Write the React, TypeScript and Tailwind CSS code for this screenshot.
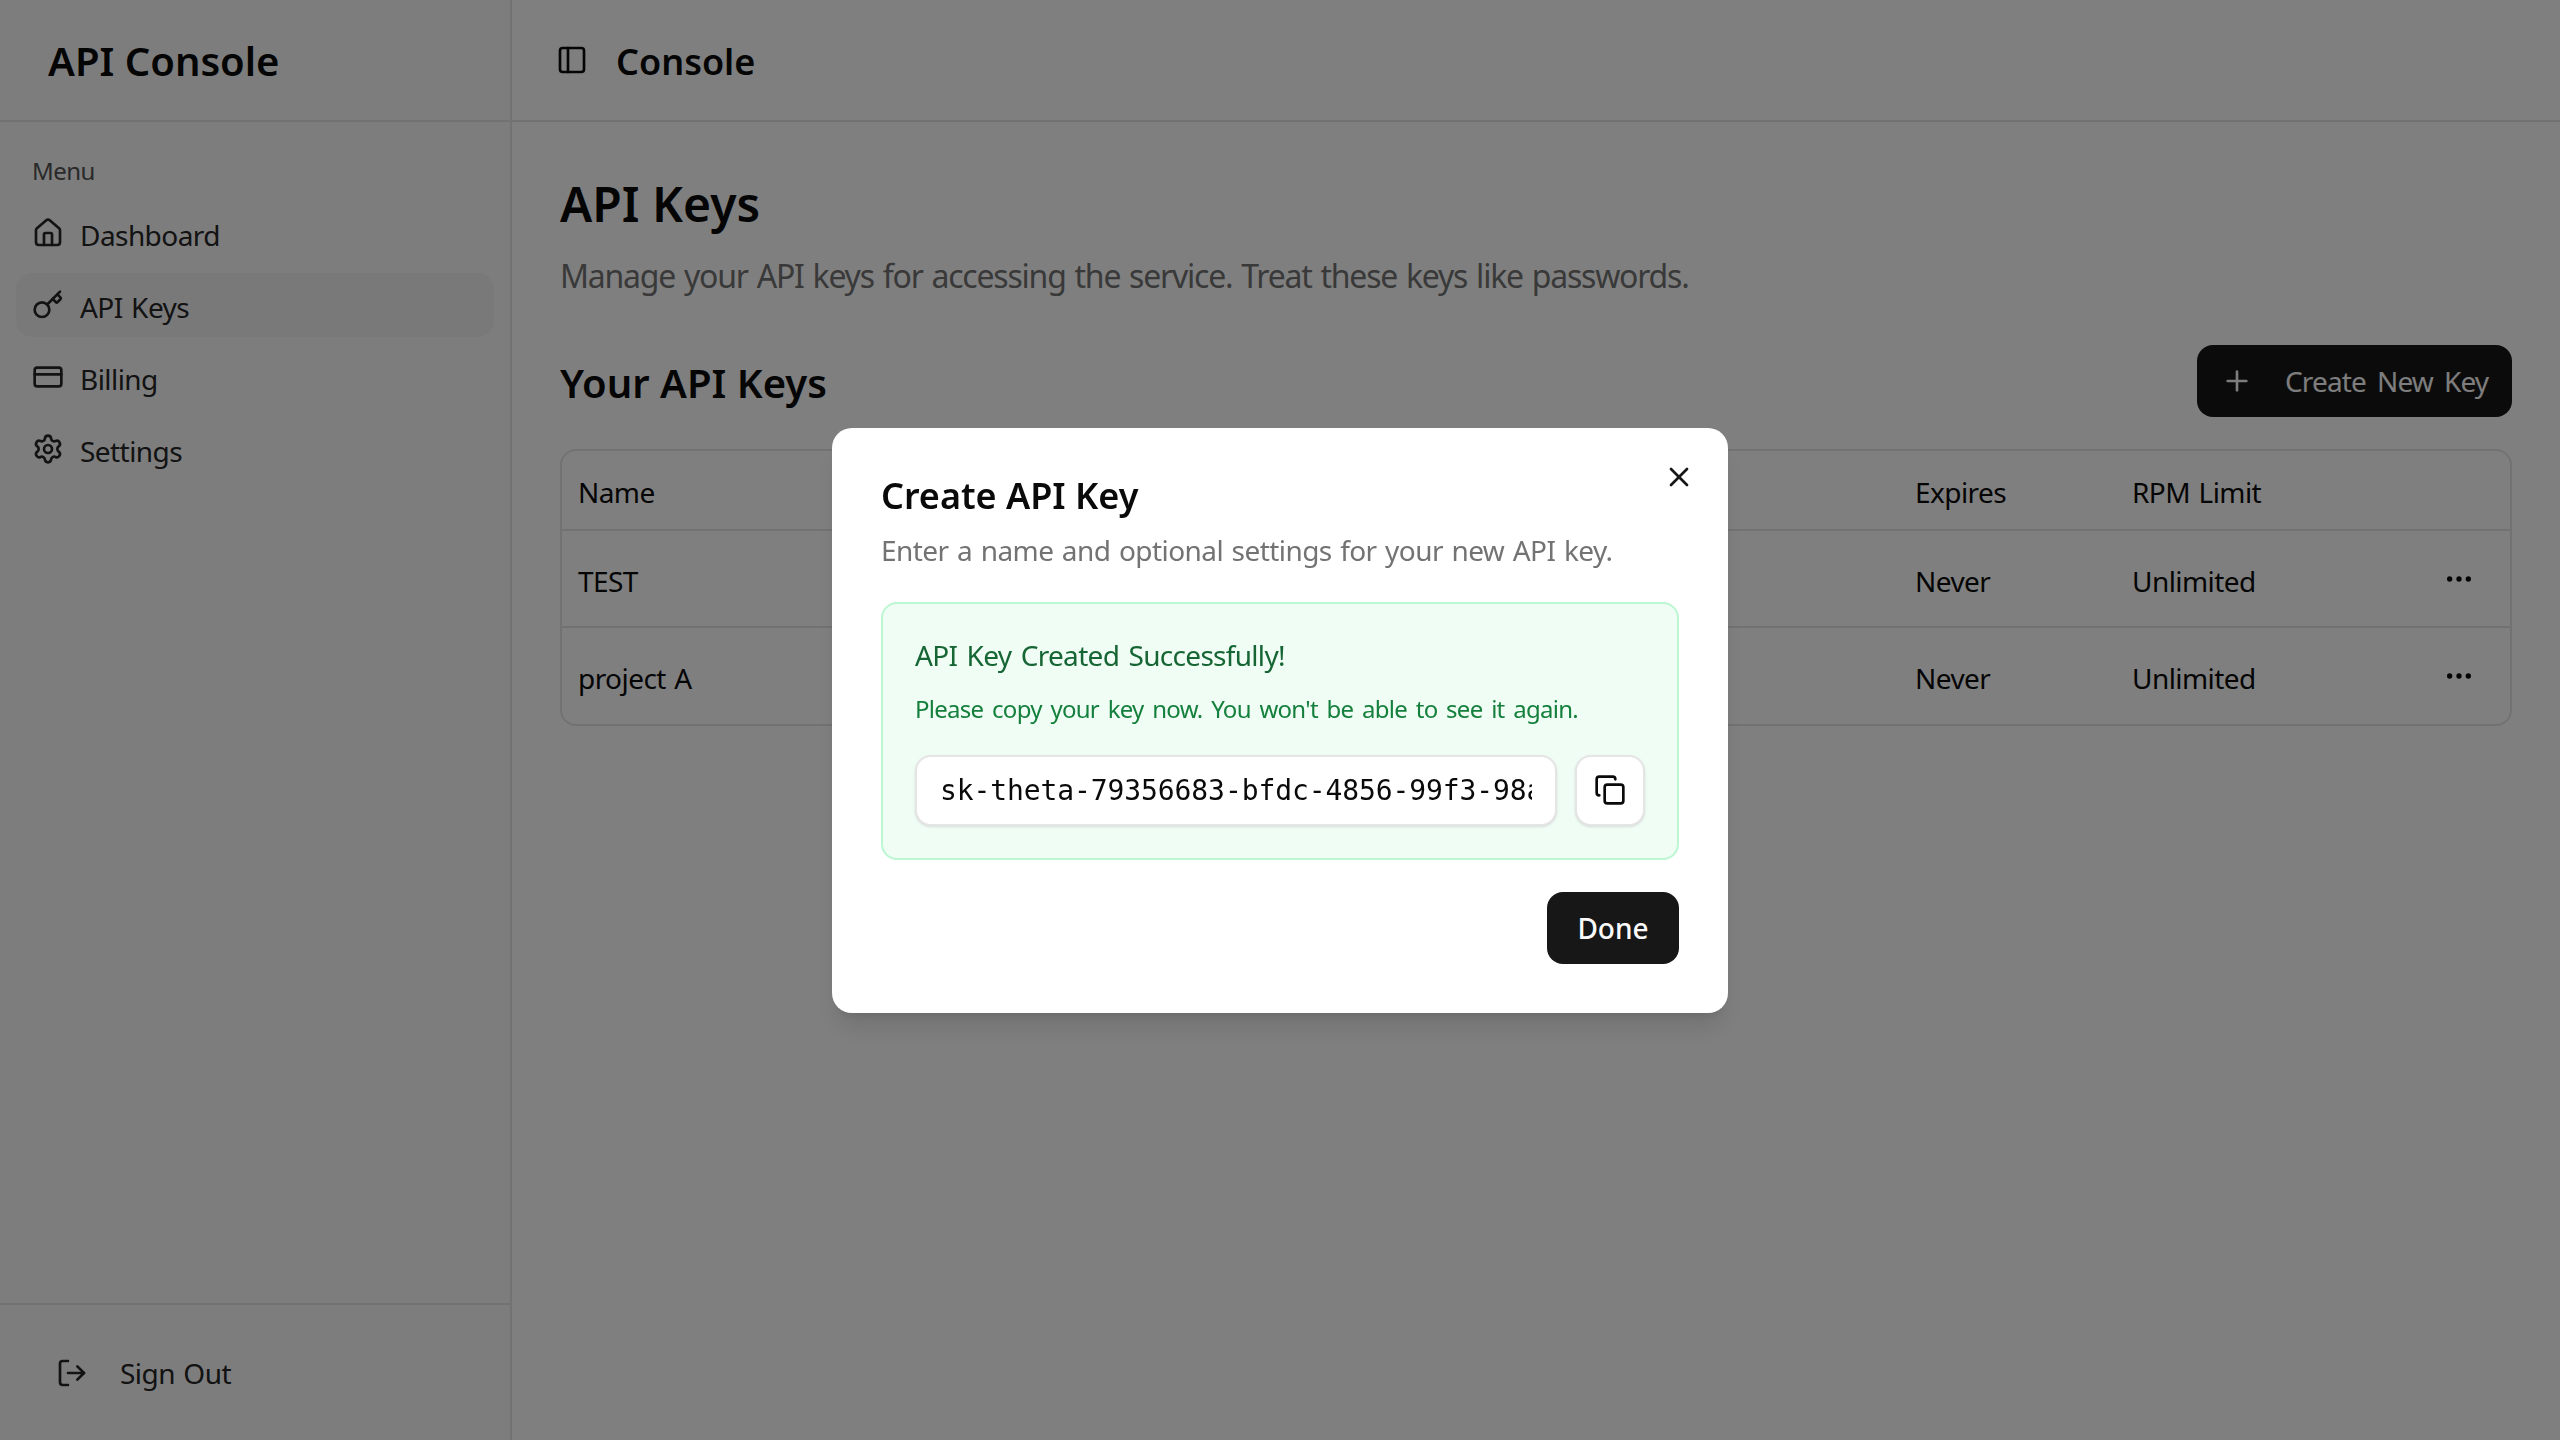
import React from "react";
import { PanelLeft, House, Key, CreditCard, Settings, LogOut, Plus, Ellipsis, X, Copy } from "lucide-react";

const font = "font-['Noto_Sans','Open_Sans',sans-serif] tracking-[-0.035em] [word-spacing:0.11em]";
const heading = "font-semibold tracking-normal [word-spacing:normal] text-[#0a0a0a]";

const navItems = [
  { label: "Dashboard", icon: House },
  { label: "API Keys", icon: Key, active: true },
  { label: "Billing", icon: CreditCard },
  { label: "Settings", icon: Settings },
];

const rows = [
  { name: "TEST", expires: "Never", limit: "Unlimited" },
  { name: "project A", expires: "Never", limit: "Unlimited" },
];

function Sidebar() {
  return (
    <aside className="w-[512px] shrink-0 h-full flex flex-col border-r-2 border-[#e5e5e5] bg-[#fafafa]">
      <div className="h-[122px] shrink-0 flex items-center px-12 pt-[2px] border-b-2 border-[#e5e5e5]">
        <span className={`text-[40px] ${heading}`}>API Console</span>
      </div>
      <nav className="flex-1 px-4 pt-[33px]">
        <p className="px-4 h-8 text-2xl leading-8 text-[#525252]">Menu</p>
        <ul className="mt-[14px] flex flex-col gap-2">
          {navItems.map(({ label, icon: Icon, active }) => (
            <li
              key={label}
              className={`h-16 flex items-center gap-4 px-4 rounded-2xl text-[28px] text-[#262626] ${active ? "bg-[#f3f3f3]" : ""}`}
            >
              <Icon className="w-8 h-8 shrink-0" />
              <span className="mt-1">{label}</span>
            </li>
          ))}
        </ul>
      </nav>
      <div className="h-[137px] shrink-0 flex items-center gap-8 pl-14 border-t-2 border-[#e5e5e5] text-[28px] text-[#262626]">
        <LogOut className="w-8 h-8 shrink-0" />
        Sign Out
      </div>
    </aside>
  );
}

function KeysTable() {
  return (
    <div className="mt-8 border-2 border-[#e5e5e5] rounded-2xl text-[28px] text-[#0a0a0a]">
      <div className="h-[80px] pt-1 grid grid-cols-[1337px_217px_1fr] items-center px-4 border-b-2 border-[#e5e5e5]">
        <span>Name</span>
        <span>Expires</span>
        <span>RPM Limit</span>
      </div>
      {rows.map((row, i) => (
        <div
          key={row.name}
          className={`pt-1 grid grid-cols-[1337px_217px_1fr_32px] items-center pl-4 pr-[35px] ${i === 0 ? "h-[97px] border-b-2 border-[#e5e5e5]" : "h-[96px]"}`}
        >
          <span>{row.name}</span>
          <span>{row.expires}</span>
          <span>{row.limit}</span>
          <Ellipsis className="w-8 h-8 -mt-1" />
        </div>
      ))}
    </div>
  );
}

function CreatedDialog() {
  return (
    <div className="fixed inset-0 bg-black/50 flex items-center justify-center">
      <div className="relative w-[896px] px-[49px] pt-[50px] pb-[49px] bg-white rounded-[20px] shadow-xl">
        <button className="absolute top-[33px] right-[33px] text-[#171717]">
          <X className="w-8 h-8" />
        </button>
        <h2 className={`-mt-[6px] text-4xl leading-[48px] ${heading}`}>Create API Key</h2>
        <p className="mt-[10px] text-[28px] leading-10 text-[#737373]">
          Enter a name and optional settings for your new API key.
        </p>
        <div className="mt-8 p-8 h-[258px] bg-[#f0fdf4] border-2 border-[#bbf7d0] rounded-2xl">
          <h3 className="-mt-px text-[28px] leading-10 tracking-[-0.025em] [word-spacing:0.1em] text-[#166534]">
            API Key Created Successfully!
          </h3>
          <p className="mt-[18px] text-2xl leading-8 tracking-[-0.03em] [word-spacing:0.13em] text-[#15803d]">
            Please copy your key now. You won't be able to see it again.
          </p>
          <div className="mt-[30px] flex gap-[18px]">
            <input
              readOnly
              value="sk-theta-79356683-bfdc-4856-99f3-98a1c2e4f7d0"
              className="flex-1 min-w-0 h-[71px] px-[23px] bg-white border-2 border-[#e5e5e5] rounded-2xl font-['DejaVu_Sans_Mono',monospace] tracking-[-0.1px] text-[28px] text-[#0a0a0a] shadow-sm outline-none"
            />
            <button className="w-[70px] h-[71px] shrink-0 flex items-center justify-center bg-white border-2 border-[#e5e5e5] rounded-2xl shadow-sm text-[#0a0a0a]">
              <Copy className="w-8 h-8" />
            </button>
          </div>
        </div>
        <div className="mt-8 flex justify-end">
          <button className="w-[132px] h-[72px] bg-[#171717] rounded-2xl text-[28px] font-medium tracking-normal text-[#fafafa]">Done</button>
        </div>
      </div>
    </div>
  );
}

export default function App() {
  return (
    <div className={`${font} h-screen flex bg-white overflow-hidden`}>
      <Sidebar />
      <div className="flex-1 min-w-0 flex flex-col">
        <header className="h-[122px] shrink-0 flex items-center gap-[28px] pl-[44px] pt-[4px] border-b-2 border-[#e5e5e5]">
          <PanelLeft className="w-8 h-8 -mt-1 text-[#0a0a0a]" />
          <span className={`text-4xl ${heading}`}>Console</span>
        </header>
        <main className="flex-1 px-12 pt-[52px]">
          <h1 className={`text-5xl leading-[60px] ${heading}`}>API Keys</h1>
          <p className="mt-[18px] text-[32px] leading-[48px] tracking-[-0.038em] text-[#737373]">
            Manage your API keys for accessing the service. Treat these keys like passwords.
          </p>
          <div className="mt-[45px] flex items-center justify-between">
            <h2 className={`mt-[3px] text-[40px] ${heading}`}>Your API Keys</h2>
            <button className="w-[315px] h-[72px] flex items-center gap-8 pl-6 bg-[#171717] rounded-2xl text-[28px] tracking-[-0.03em] [word-spacing:0.16em] text-[#fafafa]">
              <Plus className="w-8 h-8" />
              Create New Key
            </button>
          </div>
          <KeysTable />
        </main>
      </div>
      <CreatedDialog />
    </div>
  );
}
